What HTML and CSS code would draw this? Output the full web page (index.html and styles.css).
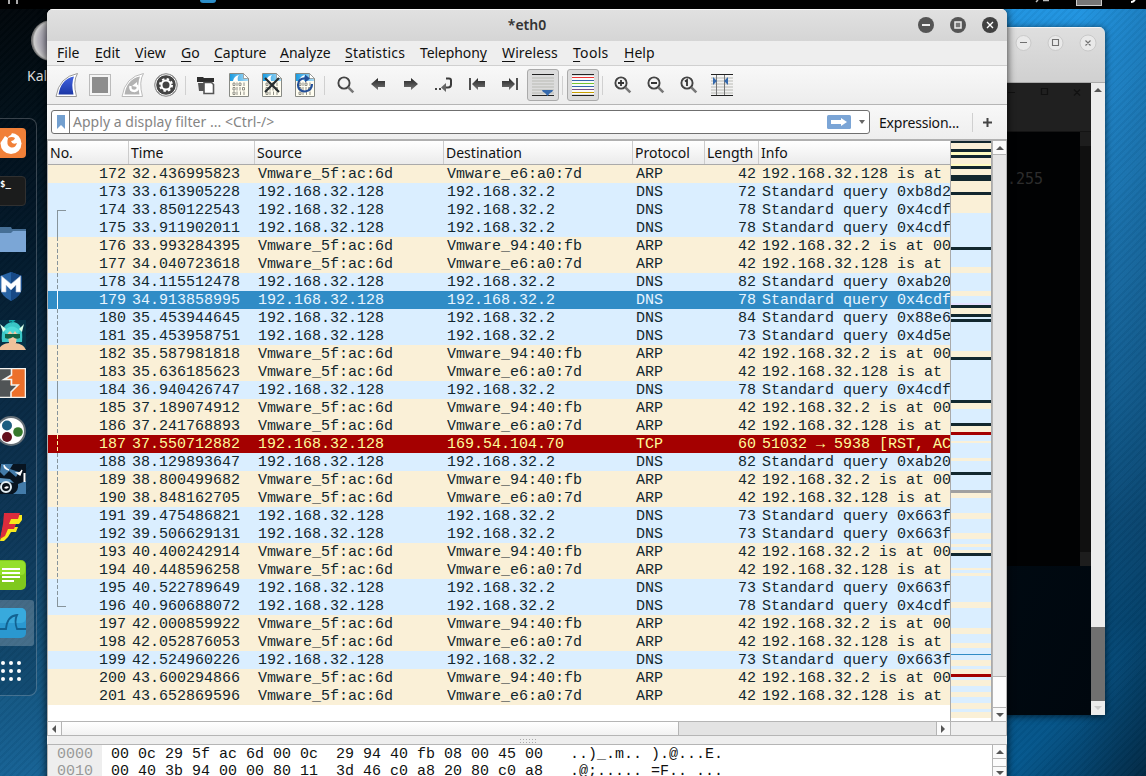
FILE: index.html
```html
<!DOCTYPE html>
<html lang="en">
<head>
<meta charset="utf-8">
<title>*eth0</title>
<link rel="stylesheet" href="styles.css">
</head>
<body>
<svg width="0" height="0" class="defs">
  <defs>
    <linearGradient id="sky" x1="0" y1="0" x2="1" y2="0"><stop offset="0" stop-color="#1b9be0"/><stop offset="1" stop-color="#a9dcf8"/></linearGradient>
    <linearGradient id="fin" x1="0" y1="0" x2="0" y2="1"><stop offset="0" stop-color="#4263e0"/><stop offset="1" stop-color="#1b36a5"/></linearGradient>
    <linearGradient id="arr" x1="0" y1="0" x2="0" y2="1"><stop offset="0" stop-color="#222"/><stop offset="1" stop-color="#777"/></linearGradient>
    <symbol id="doc" viewBox="0 0 22 26">
      <path d="M1.500 1.500h14l5 5v18h-19z" fill="#fffdf0" stroke="#888a85"/>
      <path d="M2 2h13l5 5v2H2z" fill="url(#sky)"/>
      <path d="M5 9q1-5 6-6-2 2-1 6z" fill="#fff"/>
      <path d="M15.500 1.500v5h5z" fill="#fff" stroke="#888a85" stroke-width=".7"/>
      <g fill="none" stroke="#85857b" stroke-width=".9"><path d="M5 11h2v2.500H5zM11 11h2v2.500h-2zM9 10.500v3.500M16 10.500v3.500M5 15.500h2V18H5zM14.500 15.500h2V18h-2zM9 15v3.500M12 15v3.500M5 20h2v2.500H5zM9 19.500V23M12.500 19.500V23M16 19.500V23"/></g>
    </symbol>
    <symbol id="mag" viewBox="0 0 20 20"><circle cx="8" cy="8" r="5.600" fill="none" stroke="#444" stroke-width="1.900"/><path d="M12.300 12.300l5 5" stroke="#777" stroke-width="2.600"/></symbol>
  </defs>
</svg>
<div class="desktop">
  <div class="stripes"></div>
  <div class="topbar">
    <i class="tick t1"></i><i class="tick t2"></i><i class="tb-app"></i>
    <svg class="tb-right" width="120" height="9"><path d="M12 0l-2 2M17 .5h6" stroke="#bbb" stroke-width="1.500"/><rect x="50.500" y="-4" width="25" height="9.500" fill="#777" stroke="#ccc"/><path d="M105 2q3 0 4-3" stroke="#fff" stroke-width="2" fill="none"/></svg>
  </div>
  <div class="desk-icon"></div>
  <div class="desk-label">Kali</div>

  <nav class="dock">
    <div class="slot"><svg width="30" height="30"><rect width="30" height="30" rx="4" fill="#f18038"/><circle cx="15" cy="15.500" r="10.500" fill="#fff"/><path d="M4 3h13l-2 4q-3 1-3 3l-3-2-4 6z" fill="#f18038"/><path d="M12 10q4-2 7 0-1 3-4 3 1 4 6 2-2 6-7 4-4-2-2-9z" fill="#f18038"/></svg></div>
    <div class="slot"><div class="term">$_</div></div>
    <div class="slot"><svg width="30" height="30"><path d="M0 3h15l1 2h14v23H0z" fill="#466f96"/><path d="M0 9h15l2-2h13v21H0z" fill="#7ba6d6"/></svg></div>
    <div class="slot"><svg width="30" height="30"><path d="M15 0l11 4v12q-1 8-11 13Q5 24 4 16V4z" fill="#2864a5"/><path d="M15 0l11 4v12q-1 8-11 13z" fill="#174986"/><path d="M5.500 20V4l9.500 8 9.500-8v16h-4.500v-7L15 18l-5-5v7z" fill="#fff" stroke="#b8c8dc" stroke-width=".6"/></svg></div>
    <div class="slot"><svg width="30" height="30"><rect width="30" height="30" fill="#053247"/><path d="M6 22Q4 4 16 2q12 0 10 20z" fill="#3bc6c6"/><path d="M11 10h11l-2 13h-7z" fill="#f3c7a4"/><path d="M3 30q1-6 10-7v-3h6v3q9 1 11 7z" fill="#efc19a"/><path d="M9 14h15v4q-4 2-7-1-4 3-8 1z" fill="#116246"/><path d="M8 11Q16 2 24 11l-3 3-2-3-2 3-3-3-3 3z" fill="#4ddbd8"/><path d="M4 4l6 5-3 3zM28 4l-5 5 3 3z" fill="#d7ffe8"/><path d="M13 1l6-1-4 3" fill="none" stroke="#1aa" stroke-width="1.300"/></svg></div>
    <div class="slot"><svg width="30" height="30"><rect width="30" height="30" fill="#505456"/><path d="M16 1h13v28H15v-5l7-7h-8V12H7l9-5z" fill="#ec702b"/><path d="M0 .5h29.500v29H0M15.500 1v6L8 11.500h7.500v5.500H22l-7 7v5" fill="none" stroke="#f3f3f0" stroke-width="1.600"/></svg></div>
    <div class="slot"><svg width="30" height="30"><circle cx="15" cy="15" r="14" fill="#fff" stroke="#667078" stroke-width="2"/><circle cx="11" cy="9.500" r="5" fill="#1d5d80"/><circle cx="22" cy="16" r="4.800" fill="#36782b"/><circle cx="11" cy="21" r="5" fill="#64101d"/></svg></div>
    <div class="slot"><svg width="30" height="30"><rect width="30" height="30" fill="#081420"/><path d="M5 0h12l-3 5 9 3-3 5-7-6-5 5-4-4z" fill="#437ba9"/><path d="M22 20l8-3v13H17q6-3 5-10z" fill="#437ba9"/><path d="M4 14l10 1 4 4-5-1-9 1z" fill="#5b92bd"/><path d="M8 1q0 4 5 5M21 9q4 0 5-3l-2 5z" stroke="#fff" stroke-width="1.300" fill="#fff"/><circle cx="10" cy="23" r="5" fill="#0a1118" stroke="#e5f0f5" stroke-width="2"/><path d="M8 24q2-3 5-1-2 3-5 1z" fill="#fff"/><path d="M28.500 9v9" stroke="#fff" stroke-width="2"/></svg></div>
    <div class="slot"><svg width="30" height="30"><path d="M10 3h16v5l-3 4h-6v3h5l-2 5h-5l-3 5-4 4H4l3-14z" fill="#f9e91d"/><path d="M8 1h16l-2 6h-7l-2 5h7l-2 5h-6l-3 7-5 3H4l3-15z" fill="#dd2c3c"/></svg></div>
    <div class="slot"><svg width="30" height="30"><rect width="30" height="30" rx="5" fill="#7fc91d"/><rect y="1" width="29" height="14" rx="4" fill="#94df2b"/><path d="M6 9h18M6 13h18M6 17h18M6 21h12" stroke="#fff" stroke-width="2"/></svg></div>
    <div class="slot active"><svg width="30" height="30"><rect width="30" height="30" rx="5" fill="#2a98d0"/><rect width="30" height="15" rx="5" fill="#38aadd"/><path d="M4 21h6q1-13 11-14-3 6 0 14h9" fill="none" stroke="#126291" stroke-width="1.800"/></svg></div>
    <div class="slot"><svg width="30" height="30" fill="#fff"><circle cx="7" cy="7" r="2"/><circle cx="15" cy="7" r="2"/><circle cx="23" cy="7" r="2"/><circle cx="7" cy="15" r="2"/><circle cx="15" cy="15" r="2"/><circle cx="23" cy="15" r="2"/><circle cx="7" cy="23" r="2"/><circle cx="15" cy="23" r="2"/><circle cx="23" cy="23" r="2"/></svg></div>
  </nav>

  <section class="window back">
    <header class="back-title">
      <svg width="96" height="33"><g fill="#e9e9e9" stroke="#c9c9c9"><circle cx="14.500" cy="16" r="7.500"/><circle cx="46.500" cy="16" r="7.500"/><circle cx="79" cy="16" r="8"/></g><path d="M11 15.500h7M43.500 12.500h6v6h-6zM76.500 13.500l5 5M81.500 13.500l-5 5" fill="none" stroke="#707070" stroke-width="1.100"/></svg>
    </header>
    <div class="back-main">
      <div class="back-view">
        <div class="inner-title"><svg width="91" height="20"><path d="M4 9.500h7M37.500 5.500h6v6h-6zM70 6.500l6 6M76 6.500l-6 6" fill="none" stroke="#111" stroke-width="1.200"/></svg></div>
        <div class="inner-main"><div class="inner-text">.255</div><div class="inner-sb"><i></i><i></i></div></div>
      </div>
      <div class="back-sb"><i class="up"></i><b></b><i class="down"></i></div>
    </div>
  </section>

  <section class="window main">
    <header class="title"><span></span><h1>*eth0</h1>
      <svg width="90" height="32"><circle cx="9" cy="16" r="8" fill="#555"/><circle cx="41" cy="16" r="8" fill="#555"/><circle cx="73" cy="16" r="8" fill="#414141"/><path d="M5 16h8" stroke="#eee" stroke-width="2"/><rect x="38" y="13" width="6" height="6" fill="#777" stroke="#eee" stroke-width="1.500"/><path d="M70 13l6 6M76 13l-6 6" stroke="#fff" stroke-width="1.400"/></svg>
    </header>
    <nav class="menu">
      <span class="m1"><u>F</u>ile</span><span class="m2"><u>E</u>dit</span><span class="m3"><u>V</u>iew</span><span class="m4"><u>G</u>o</span><span class="m5"><u>C</u>apture</span><span class="m6"><u>A</u>nalyze</span><span class="m7"><u>S</u>tatistics</span><span class="m8">Telephon<u>y</u></span><span class="m9"><u>W</u>ireless</span><span class="m10"><u>T</u>ools</span><span class="m11"><u>H</u>elp</span>
    </nav>
    <div class="toolbar">
      <div class="tool"><svg width="24" height="26"><path d="M1 24.500Q4 5 22.500 1.500q-5 8-1 23z" fill="#fff" stroke="#999"/><path d="M3.500 22.500Q6 7 19 4.500q-3 7-.5 18z" fill="url(#fin)"/></svg></div>
      <div class="tool"><svg width="24" height="26"><rect x="1.500" y="2.500" width="21" height="21" fill="#f5f5f5" stroke="#bbb"/><rect x="4" y="5" width="16" height="16" fill="#8d8d8d"/></svg></div>
      <div class="tool"><svg width="24" height="26"><path d="M1 24.500Q4 5 22.500 1.500q-5 8-1 23z" fill="#fff" stroke="#bbb"/><path d="M3.500 22.500Q6 7 19 4.500q-3 7-.5 18z" fill="#b3b3b3"/><path d="M9.500 14q-1 5 4 5 5-1 2.500-6" fill="none" stroke="#fff" stroke-width="2.500"/><path d="M11 14l5-4v5z" fill="#fff"/></svg></div>
      <div class="tool"><svg width="26" height="26"><circle cx="13" cy="13" r="11.300" fill="#444" stroke="#999"/><circle cx="13" cy="13" r="10.300" fill="#444" stroke="#fff"/><circle cx="13" cy="13" r="4.500" fill="none" stroke="#fff" stroke-width="2"/><circle cx="13" cy="13" r="6" fill="none" stroke="#fff" stroke-width="2" stroke-dasharray="2.400 2.310"/></svg></div>
      <i class="sep"></i>
      <div class="tool"><svg width="20" height="22"><path d="M1 6V3h6l1 1h10v4H1z" fill="#2e2e2e"/><path d="M2 9h7v8H3z" fill="#555"/><path d="M8 8.500h7.500l2 2v9H8z" fill="#fff" stroke="#555" stroke-width="1.600"/></svg></div>
      <div class="tool"><svg width="22" height="26"><use href="#doc"/></svg></div>
      <div class="tool"><svg width="22" height="26"><use href="#doc"/><path d="M4 6l14 14M18 6L4 20" stroke="#262c2e" stroke-width="2.200"/></svg></div>
      <div class="tool"><svg width="22" height="26"><use href="#doc"/><path d="M12 6.500Q4 6 4 13q0 6 7 6.500 7-1 7-7.500" fill="none" stroke="#234f98" stroke-width="2.200"/><path d="M11 2.500l5 4-5 4z" fill="#234f98"/></svg></div>
      <i class="sep"></i>
      <div class="tool nudge"><svg width="20" height="20"><use href="#mag"/></svg></div>
      <div class="tool"><svg width="16" height="14"><path d="M1 6L8 0v3h7v6H8v3z" fill="url(#arr)"/></svg></div>
      <div class="tool"><svg width="16" height="14"><path d="M15 6L8 0v3H1v6h7v3z" fill="url(#arr)"/></svg></div>
      <div class="tool"><svg width="20" height="18"><path d="M12 2.500h3q2 0 2 2v4q0 3-3 3h-2" fill="none" stroke="#3b3b3b" stroke-width="2"/><path d="M7 11.500l5-4.500v9z" fill="#666"/><path d="M1 12h2v2H1zM5 12h2v2H5z" fill="#444"/></svg></div>
      <div class="tool"><svg width="18" height="14"><path d="M2 0v12" stroke="#333" stroke-width="1.700"/><path d="M4 6l6-6v3h7v6h-7v3z" fill="url(#arr)"/></svg></div>
      <div class="tool"><svg width="18" height="14"><path d="M16 0v12" stroke="#333" stroke-width="1.700"/><path d="M14 6L8 0v3H1v6h7v3z" fill="url(#arr)"/></svg></div>
      <div class="tool pressed"><svg width="22" height="24"><path d="M0 1.500h22M0 22.500h22" stroke="#222"/><path d="M0 5h22M0 8h22M0 11h22M0 14h22M0 17h22M0 20h22" stroke="#b9bab4"/><path d="M10 17h11q0 2-3 3l-2.500 3-2.500-3q-3-1-3-3z" fill="#3569ac"/></svg></div>
      <i class="sep"></i>
      <div class="tool pressed"><svg width="22" height="24"><path d="M0 3h22v18H0z" fill="#fafafa"/><g stroke-width="1"><path d="M0 1.500h22M0 22.500h22" stroke="#222"/><path d="M0 4.500h22" stroke="#e33"/><path d="M0 7.500h22M0 13.500h22" stroke="#3568ab"/><path d="M0 10.500h22" stroke="#75c631"/><path d="M0 16.500h22" stroke="#76518a"/><path d="M0 19.500h22" stroke="#c9a000"/></g></svg></div>
      <i class="sep"></i>
      <div class="tool"><svg width="20" height="20"><use href="#mag"/><path d="M5 8h6M8 5v6" stroke="#333" stroke-width="1.800"/></svg></div>
      <div class="tool"><svg width="20" height="20"><use href="#mag"/><path d="M5 8h6" stroke="#333" stroke-width="1.800"/></svg></div>
      <div class="tool"><svg width="20" height="20"><use href="#mag"/><path d="M6 6.500l2-1.500v6" fill="none" stroke="#333" stroke-width="1.800"/></svg></div>
      <div class="tool"><svg width="22" height="24"><path d="M0 5h22M0 8h22M0 11h22M0 14h22M0 17h22M0 20h22" stroke="#b9bab4"/><path d="M0 1.500h22M0 22.500h22" stroke="#222"/><path d="M5.500 2v20M13.500 2v20" stroke="#777"/><path d="M2 4l4 4-4 4zM17 4l-4 4 4 4z" fill="#3569ac"/></svg></div>
    </div>
    <div class="filterbar">
      <div class="filter">
        <span class="mark"><svg width="8" height="15"><path d="M0 0h8v14l-4-4-4 4z" fill="#729fcf"/></svg></span>
        <span class="ph">Apply a display filter ... &lt;Ctrl-/&gt;</span>
        <svg class="apply" width="24" height="14"><rect width="24" height="14" rx="1.500" fill="#7ba5d6"/><path d="M4 5h10V3l6 4-6 4V9H4z" fill="#fff"/></svg>
        <i class="caret"></i>
      </div>
      <span class="expr">Expression...</span><i class="sep"></i>
      <svg class="plus" width="9" height="9"><path d="M0 4.500h9M4.500 0v9" stroke="#444" stroke-width="2"/></svg>
    </div>
    <div class="capture">
      <div class="list">
        <div class="cols head"><span>No.</span><span>Time</span><span>Source</span><span>Destination</span><span>Protocol</span><span>Length</span><span>Info</span></div>
        <div class="rows" id="rows"></div>
      </div>
      <div class="map" id="map"></div>
      <div class="vsb"><i class="btn up"></i><i class="track"></i><i class="thumb"></i><i class="btn down"></i></div>
    </div>
    <div class="hsb"><i class="btn left"></i><i class="thumb"></i><i class="track"></i><i class="btn right"></i></div>
    <div class="split"><i></i></div>
    <div class="hex">
      <pre class="off">0000
0010</pre>
      <pre class="bytes">00 0c 29 5f ac 6d 00 0c  29 94 40 fb 08 00 45 00   ..)_.m.. ).@...E.
00 40 3b 94 00 00 80 11  3d 46 c0 a8 20 80 c0 a8   .@;..... =F.. ...</pre>
      <div class="vsb small"><i class="btn up"></i><i class="thumb"></i><i class="btn down"></i></div>
    </div>
  </section>
</div>
<script src="app.js"></script>
</body>
</html>
```
FILE: styles.css
```css
* { box-sizing: border-box; }
body { margin: 0; font-family: "Noto Sans", "Open Sans", sans-serif; font-size: 14px; color: #111; }
i { font-style: normal; }
svg { display: block; }
.defs { position: absolute; }
.desktop { position: relative; width: 1146px; height: 776px; overflow: hidden;
  background:
    linear-gradient(135deg, transparent 60%, rgba(0,16,28,.6) 100%) 1000px 560px / 146px 216px no-repeat,
    linear-gradient(90deg, transparent 1080px, rgba(0,16,28,.16) 1146px),
    linear-gradient(180deg, #2196e3 0, #1f86cb 120px, #1a74b1 260px, #13639a 400px, #0b4f7e 520px, #054a78 620px, #055a92 776px) 1000px 0 / 146px 776px no-repeat,
    linear-gradient(180deg, #01060a 0, #010f18 110px, #041f33 260px, #0b304c 400px, #104064 530px, #135078 640px, #166295 776px); }
.stripes { position: absolute; inset: 0; background: repeating-linear-gradient(135deg, rgba(0,0,0,.04) 0 2px, rgba(255,255,255,.012) 2px 5px); }
.topbar { position: absolute; left: 0; top: 0; width: 1146px; height: 9px; background: #000; overflow: hidden; }
.tick { position: absolute; top: 0; width: 2px; height: 4px; background: #aaa; }
.t1 { left: 8px; } .t2 { left: 16px; }
.tb-app { position: absolute; left: 200px; top: -10px; width: 16px; height: 13px; border-radius: 3px; background: #2e91cd; }
.tb-right { position: absolute; right: 0; top: 0; }
.desk-icon { position: absolute; left: 31px; top: 20px; width: 41px; height: 41px; border-radius: 50%; background: radial-gradient(circle at 55% 50%, #8e8ba0 0, #b5b3bb 50%, #ccc 64%, #777 70%); }
.desk-label { position: absolute; left: 27px; top: 66px; color: #ddd; line-height: 20px; }

.dock { position: absolute; left: -10px; top: 118px; width: 47px; height: 578px; border: 1px solid rgba(255,255,255,.22); border-radius: 0 8px 8px 0; background: rgba(0,10,20,.15); display: flex; flex-direction: column; }
.slot { height: 48px; padding-left: 5px; display: flex; align-items: center; flex: none; }
.slot.active { position: relative; }
.slot.active::before { content: ""; position: absolute; left: 5px; top: 1px; width: 38px; height: 46px; border-radius: 3px; background: rgba(255,255,255,.22); }
.slot.active svg { position: relative; }
.term { width: 30px; height: 30px; border-radius: 4px; background: #1b1c1c; border: 1px solid #303030; color: #fff; font: bold 9px/14px "DejaVu Sans Mono", monospace; padding-left: 3px; }

.window { position: absolute; display: flex; flex-direction: column; overflow: hidden; }
.back { left: 900px; top: 27px; width: 205px; height: 688px; border-radius: 0 6px 0 0; box-shadow: 0 1px 7px rgba(0,0,0,.65); }
.back-title { height: 56px; background: linear-gradient(#dfdfdf, #d0d0d0); border-bottom: 1px solid #aaa; display: flex; justify-content: flex-end; box-shadow: inset 0 1px #f5f5f5; }
.back-main { flex: 1; display: flex; }
.back-view { width: 191px; background: linear-gradient(115deg, #000f19, #00070e); }
.inner-title { height: 49px; background: #202020; border-bottom: 1px solid #141414; display: flex; justify-content: flex-end; }
.inner-title svg { width: 87px; }
.inner-main { height: 434px; background: #010203; display: flex; justify-content: flex-end; }
.inner-text { color: #2d2d2d; font: 15px/20px "DejaVu Sans Mono", monospace; padding: 37px 37px 0 0; }
.inner-sb { width: 11px; background: #101010; display: flex; flex-direction: column; justify-content: space-between; }
.inner-sb i { height: 14px; background: #1d1d1d; }
.back-sb { width: 14px; background: #ececec; display: flex; flex-direction: column; align-items: center; }
.back-sb b { width: 14px; height: 74px; margin-top: 531px; background: #707070; }
.up::before, .down::before, .left::before, .right::before, .caret { content: ""; border: 4px solid transparent; width: 0; height: 0; }
.back-sb .up { height: 13px; padding-top: 5px; display: flex; }
.back-sb .down { padding-top: 5px; display: flex; }
.up::before { border-top: 0; border-bottom-color: #555; }
.down::before { border-bottom: 0; border-top-color: #555; }
.left::before { border-left: 0; border-right-color: #555; }
.right::before { border-right: 0; border-left-color: #555; }
.back-sb .down::before { border-top-color: #ccc; }

.main { left: 47px; top: 9px; width: 960px; height: 780px; border-radius: 6px 6px 0 0; background: #eee; box-shadow: 0 0 8px rgba(0,0,0,.8); }
.title { height: 32px; flex: none; background: linear-gradient(#e1e1e1, #d5d5d5); box-shadow: inset 0 1px #f6f6f6; display: grid; grid-template-columns: 90px 1fr 90px; }
.title h1 { margin: 0; font-size: 14px; line-height: 31px; text-align: center; color: #333; font-weight: 600; }
.menu { height: 25px; flex: none; display: flex; background: #eee; border-bottom: 1px solid #d0d0d0; padding-left: 10px; line-height: 23px; }
.menu span { flex: none; white-space: nowrap; }
.menu u { text-decoration-thickness: 1px; text-underline-offset: 3px; text-decoration-skip-ink: none; }
.m1 { width: 38px; } .m2 { width: 40px; } .m3 { width: 46px; } .m4 { width: 33px; } .m5 { width: 66px; } .m6 { width: 65px; }
.m7 { width: 75px; letter-spacing: .2px; } .m8 { width: 82px; letter-spacing: -.1px; } .m9 { width: 71px; letter-spacing: .1px; } .m10 { width: 51px; letter-spacing: .3px; }
.toolbar { height: 39px; flex: none; display: flex; align-items: center; padding-left: 3px; background: linear-gradient(#f8f8f8, #ededed); border-bottom: 1px solid #b5b5b5; }
.tool { width: 33px; height: 32px; flex: none; display: flex; align-items: center; justify-content: center; }
.nudge { padding-left: 2px; }
.pressed { width: 32px; margin-left: 1px; border: 1px solid #aaa; border-radius: 3px; background: #dcdcdc; }
.sep { width: 1px; height: 19px; margin: 0 3px; background: #d0d0d0; flex: none; }
.filterbar { height: 34px; flex: none; display: flex; align-items: center; padding-left: 4px; background: linear-gradient(#f8f8f8, #eee); }
.filter { width: 819px; height: 24px; border: 1px solid #6f6f6f; border-radius: 3px; background: #fff; display: flex; align-items: center; }
.mark { width: 18px; height: 22px; border-right: 1px solid #777; display: flex; justify-content: center; align-items: center; }
.ph { flex: 1; padding-left: 3px; color: #858585; letter-spacing: .03px; line-height: 22px; }
.caret { border-width: 4px 3.500px 0; border-top-color: #666; margin: 0 4px 0 8px; }
.expr { margin-left: 9px; width: 90px; white-space: nowrap; letter-spacing: -.2px; }
.filterbar .plus { margin-left: 7px; }
.capture { height: 582px; flex: none; border-top: 2px solid #b0b0b0; display: flex; border-left: 1px solid #b0b0b0; background: #fff; }
.list { width: 902px; overflow: hidden; }
.cols { display: grid; grid-template-columns: 81px 126px 189px 189px 72px 54px 191px; }
.head { height: 24px; background: linear-gradient(#fff, #ebebeb); border-bottom: 1px solid #aaa; line-height: 23px; font-size: 14px; }
.head span { padding-left: 2px; border-right: 1px solid #ccc; }
.head span:last-child { border: 0; }
.rows { font: 15px/20px "Liberation Mono", monospace; }
.pkt { height: 18px; background: #daeeff; color: #12272e; white-space: pre; position: relative; }
.pkt span { height: 18px; padding-left: 3px; }
.pkt span:nth-child(1), .pkt span:nth-child(6) { text-align: right; padding: 0 3px 0 0; }
.arp { background: #faf0d7; }
.sel { background: #308cc6; color: #e9f5ff; }
.rst { background: #a40000; color: #fffc9c; }
.conv { position: absolute; left: 9px; top: 0; width: 9px; height: 18px; border-left: 1px solid #87949b; }
.conv.dash { border: 0; background: repeating-linear-gradient(#87949b 0 4px, transparent 4px 6px) 0 0 / 1px 18px no-repeat; }
.conv.first { top: 9px; height: 9px; border-top: 1px solid #87949b; }
.conv.last { height: 10px; border-bottom: 1px solid #87949b; }
.sel .conv { border-color: #fff; }
.rst .conv.dash { background-image: repeating-linear-gradient(#fffc9c 0 4px, transparent 4px 6px); }
.map { width: 42px; border-left: 1px solid #aaa; border-right: 1px solid #aaa; }
.map i { display: block; }
.vsb { width: 15px; border-left: 1px solid #b5b5b5; border-right: 1px solid #b5b5b5; background: #e5e5e5; display: flex; flex-direction: column; }
.btn { height: 14px; display: flex; align-items: center; justify-content: center; background: #fafafa; flex: none; }
.vsb .up { border-bottom: 1px solid #b5b5b5; }
.vsb .down { border-top: 1px solid #b5b5b5; }
.vsb .track { flex: 1; }
.vsb .thumb { height: 31px; background: #fcfcfc; border-top: 1px solid #b5b5b5; }
.capture .down { height: 14px; }
.hsb { height: 15px; flex: none; display: flex; background: #eee; border: 1px solid #b5b5b5; }
.hsb .btn { width: 14px; height: 13px; }
.hsb .left { border-right: 1px solid #b5b5b5; padding-right: 2px; }
.hsb .right { border-left: 1px solid #b5b5b5; border-right: 1px solid #b5b5b5; width: 15px; padding-right: 2px; }
.hsb .thumb { width: 617px; background: linear-gradient(#fff, #f2f2f2); border-right: 1px solid #b5b5b5; }
.hsb .track { width: 257px; background: #e3e3e3; }
.split { height: 8px; flex: none; display: flex; justify-content: center; align-items: center; }
.split i { width: 17px; height: 5px; background: radial-gradient(circle, #aaa 0 .7px, transparent .8px) 0 0 / 3px 3px; }
.hex { height: 50px; flex: none; border: 1px solid #b5b5b5; border-right: 0; background: #fff; display: flex; font: 15px/17px "Liberation Mono", monospace; }
.hex pre { margin: 0; font: inherit; padding-top: 1px; }
.hex .off { width: 54px; padding-left: 9px; background: #eee; color: #999; }
.hex .bytes { width: 890px; padding-left: 9px; color: #111; }
.small .up { height: 14px; }
.small .thumb { height: 7px; border-top: 0; }
.small .down { height: 13px; }
```
FILE: app.js
```js
// Source and destination endpoints, keyed by the kind of packet.
const HOST = '192.168.32.128', GW = '192.168.32.2', VM = 'Vmware_5f:ac:6d';
const A = 'Vmware_e6:a0:7d', B = 'Vmware_94:40:fb';
const packets = [
  [172, '32.436995823', 'a'], [173, '33.613905228', 72, '0xb8d2'], [174, '33.850122543', 78, '0x4cdf'],
  [175, '33.911902011', 78, '0x4cdf'], [176, '33.993284395', 'b'], [177, '34.040723618', 'a'],
  [178, '34.115512478', 82, '0xab20'], [179, '34.913858995', 78, '0x4cdf'], [180, '35.453944645', 84, '0x88e6'],
  [181, '35.453958751', 73, '0x4d5e'], [182, '35.587981818', 'b'], [183, '35.636185623', 'a'],
  [184, '36.940426747', 78, '0x4cdf'], [185, '37.189074912', 'b'], [186, '37.241768893', 'a'],
  [187, '37.550712882', 'r'], [188, '38.129893647', 82, '0xab20'], [189, '38.800499682', 'b'],
  [190, '38.848162705', 'a'], [191, '39.475486821', 73, '0x663f'], [192, '39.506629131', 73, '0x663f'],
  [193, '40.400242914', 'b'], [194, '40.448596258', 'a'], [195, '40.522789649', 73, '0x663f'],
  [196, '40.960688072', 78, '0x4cdf'], [197, '42.000859922', 'b'], [198, '42.052876053', 'a'],
  [199, '42.524960226', 73, '0x663f'], [200, '43.600294866', 'b'], [201, '43.652869596', 'a']
];
const solid = [174, 175, 179, 184, 196];
document.getElementById('rows').innerHTML = packets.map(([no, time, kind, id]) => {
  let cls = '', cells;
  if (kind === 'a') { cls = 'arp'; cells = [VM, A, 'ARP', 42, HOST + ' is at']; }
  else if (kind === 'b') { cls = 'arp'; cells = [VM, B, 'ARP', 42, GW + ' is at 00']; }
  else if (kind === 'r') { cls = 'rst'; cells = [HOST, '169.54.104.70', 'TCP', 60, '51032 → 5938 [RST, AC']; }
  else cells = [HOST, GW, 'DNS', kind, 'Standard query ' + id];
  if (no === 179) cls = 'sel';
  let conv = '';
  if (no >= 174 && no <= 196) {
    const c = no === 174 ? 'first' : no === 196 ? 'last' : solid.includes(no) ? '' : 'dash';
    conv = `<i class="conv ${c}"></i>`;
  }
  return `<div class="pkt cols ${cls}">` + [no, time, ...cells].map(t => `<span>${t}</span>`).join('') + conv + '</div>';
}).join('');

// Overview strip: [colour key, height] from top to bottom.
const colours = { d: '#12272e', c: '#faf0d7', b: '#daeeff', y: '#fffcc0', r: '#a40000', g: '#a0a0a0', s: '#308cc6', l: '#e6e0ff', w: '#fff' };
const bands = 'd2 c6 d3 y3 d3 c6 y2 d3 c6 d6 c11 d3 c18 b34 d3 b17 c6 b18 c5 b7 l2 d3 c6 d3 b2 d3 b29 c6 d3 b40 d3 c6 b14 d3 c6 r3 b6 c2 b15 c3 b11 d3 b15 g3 c5 b15 c6 b14 c6 b5 c3 b3 c3 d3 b12 c2 b3 c3 b26 c6 b20 c6 b9 c5 b6 s1 b5 c6 b3 c5 r3 b3 c6 b6 c5 b6 c6 b3 c6 w2';
document.getElementById('map').innerHTML = bands.split(' ').map(b =>
  `<i style="height:${b.slice(1)}px;background:${colours[b[0]]}"></i>`).join('');
```
